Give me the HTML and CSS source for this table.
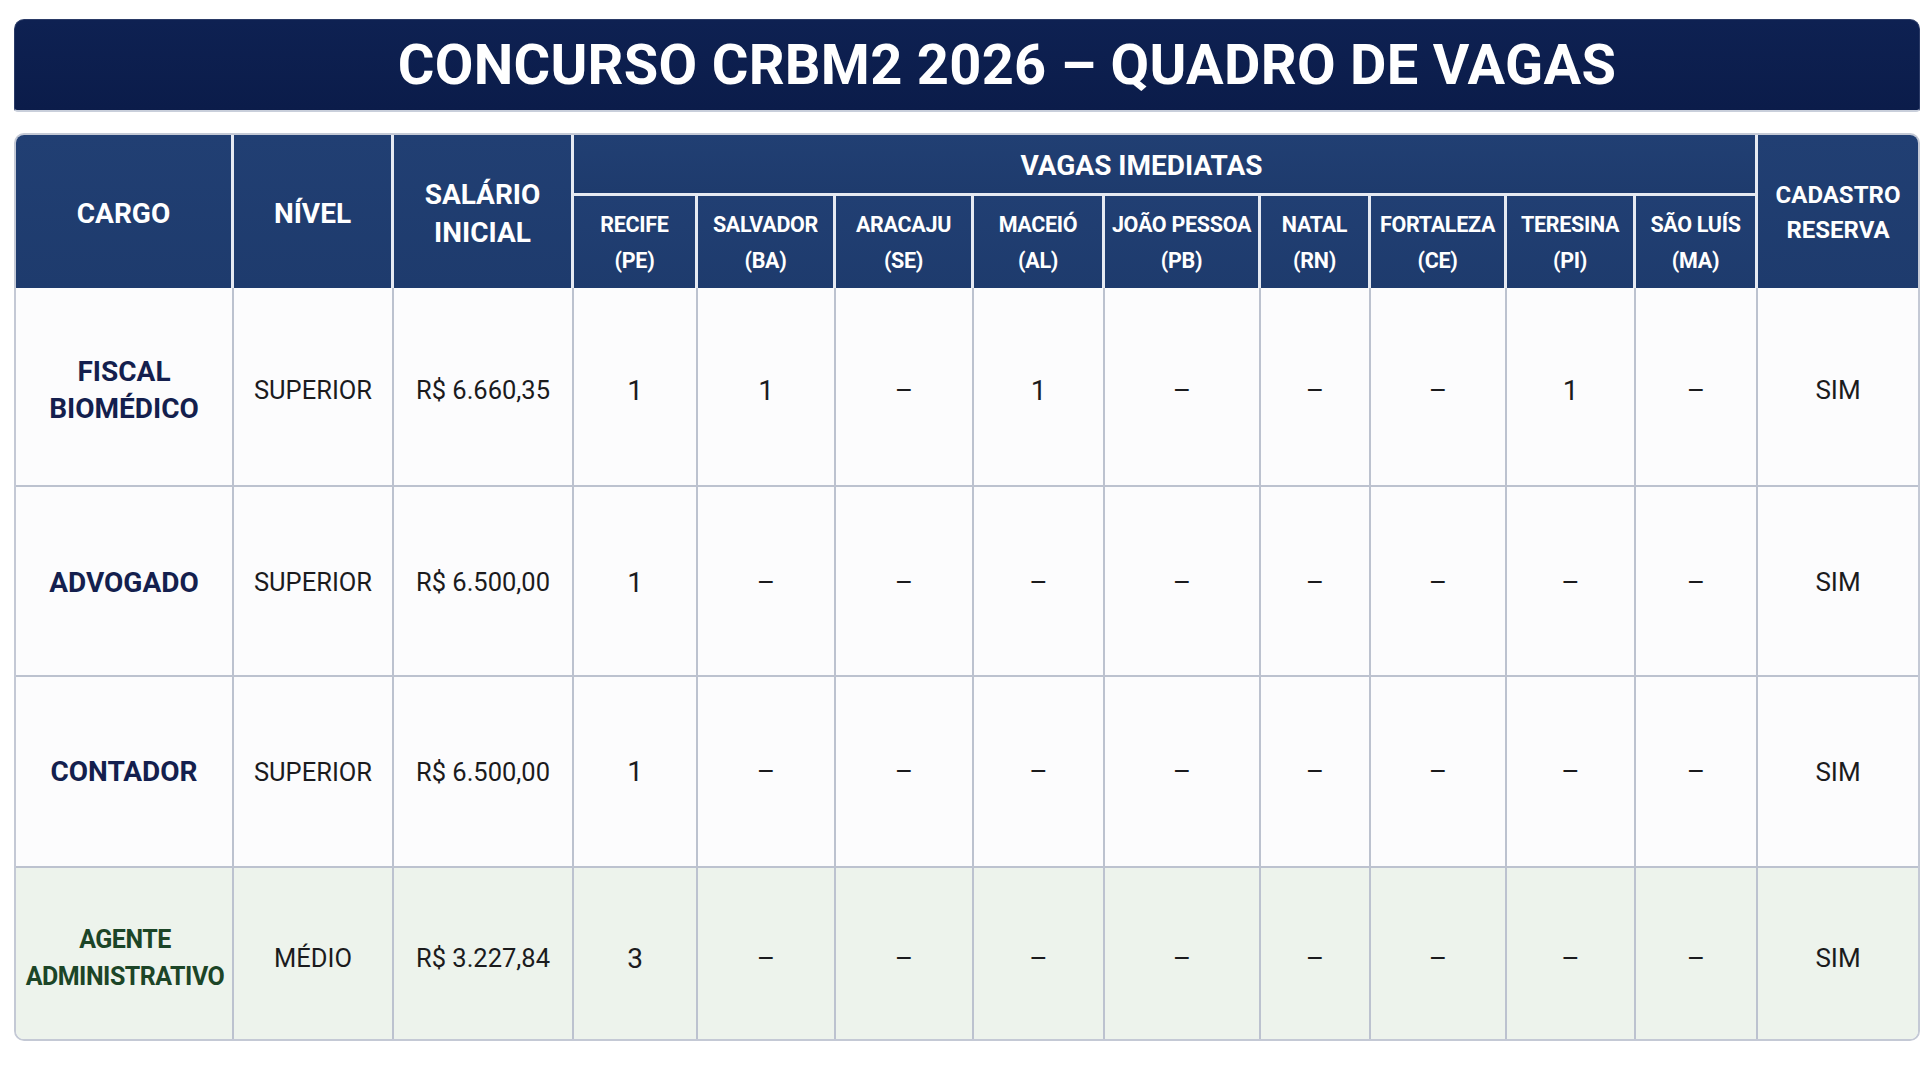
FILE: index.html
```html
<!DOCTYPE html>
<html lang="pt-BR">
<head>
<meta charset="utf-8">
<title>Concurso CRBM2 2026 – Quadro de Vagas</title>
<link rel="stylesheet" href="styles.css">
</head>
<body>
<div class="page">
  <header class="title-bar">
    <h1 class="title">CONCURSO CRBM2 2026 – QUADRO DE VAGAS</h1>
  </header>

  <div class="table-wrap">
    <div class="grid">
      <div class="hcell h-cargo">CARGO</div>
      <div class="hcell h-nivel">NÍVEL</div>
      <div class="hcell h-salario">SALÁRIO<br>INICIAL</div>
      <div class="hcell h-group"><span class="group-label">VAGAS IMEDIATAS</span></div>
      <div class="hcell h-cadastro last-col">CADASTRO<br>RESERVA</div>

      <div class="hcell sub">RECIFE<br>(PE)</div>
      <div class="hcell sub">SALVADOR<br>(BA)</div>
      <div class="hcell sub">ARACAJU<br>(SE)</div>
      <div class="hcell sub">MACEIÓ<br>(AL)</div>
      <div class="hcell sub">JOÃO PESSOA<br>(PB)</div>
      <div class="hcell sub">NATAL<br>(RN)</div>
      <div class="hcell sub">FORTALEZA<br>(CE)</div>
      <div class="hcell sub">TERESINA<br>(PI)</div>
      <div class="hcell sub">SÃO LUÍS<br>(MA)</div>

      <!-- Row 1 -->
      <div class="cell r1 cargo">FISCAL<br>BIOMÉDICO</div>
      <div class="cell r1 txt">SUPERIOR</div>
      <div class="cell r1 txt">R$ 6.660,35</div>
      <div class="cell r1 num">1</div>
      <div class="cell r1 num">1</div>
      <div class="cell r1 num">–</div>
      <div class="cell r1 num">1</div>
      <div class="cell r1 num">–</div>
      <div class="cell r1 num">–</div>
      <div class="cell r1 num">–</div>
      <div class="cell r1 num">1</div>
      <div class="cell r1 num">–</div>
      <div class="cell r1 sim last-col">SIM</div>

      <!-- Row 2 -->
      <div class="cell r2 cargo">ADVOGADO</div>
      <div class="cell r2 txt">SUPERIOR</div>
      <div class="cell r2 txt">R$ 6.500,00</div>
      <div class="cell r2 num">1</div>
      <div class="cell r2 num">–</div>
      <div class="cell r2 num">–</div>
      <div class="cell r2 num">–</div>
      <div class="cell r2 num">–</div>
      <div class="cell r2 num">–</div>
      <div class="cell r2 num">–</div>
      <div class="cell r2 num">–</div>
      <div class="cell r2 num">–</div>
      <div class="cell r2 sim last-col">SIM</div>

      <!-- Row 3 -->
      <div class="cell cargo">CONTADOR</div>
      <div class="cell txt">SUPERIOR</div>
      <div class="cell txt">R$ 6.500,00</div>
      <div class="cell num">1</div>
      <div class="cell num">–</div>
      <div class="cell num">–</div>
      <div class="cell num">–</div>
      <div class="cell num">–</div>
      <div class="cell num">–</div>
      <div class="cell num">–</div>
      <div class="cell num">–</div>
      <div class="cell num">–</div>
      <div class="cell sim last-col">SIM</div>

      <!-- Row 4 -->
      <div class="cell r4 cargo agent green last-row">AGENTE<br>ADMINISTRATIVO</div>
      <div class="cell r4 txt green last-row">MÉDIO</div>
      <div class="cell r4 txt green last-row">R$ 3.227,84</div>
      <div class="cell r4 num green last-row">3</div>
      <div class="cell r4 num green last-row">–</div>
      <div class="cell r4 num green last-row">–</div>
      <div class="cell r4 num green last-row">–</div>
      <div class="cell r4 num green last-row">–</div>
      <div class="cell r4 num green last-row">–</div>
      <div class="cell r4 num green last-row">–</div>
      <div class="cell r4 num green last-row">–</div>
      <div class="cell r4 num green last-row">–</div>
      <div class="cell r4 sim green last-row last-col">SIM</div>
    </div>
  </div>
</div>
</body>
</html>
```

FILE: styles.css
```css
* { box-sizing: border-box; }

html, body {
  margin: 0;
  padding: 0;
  background: #ffffff;
  overflow: hidden;
}

body {
  font-family: Roboto, "Liberation Sans", Arial, sans-serif;
  color: #1b1b1d;
}

.page {
  width: 1920px;
  height: 1080px;
  padding: 19px 0 0 14px;
}

.title-bar {
  width: 1906px;
  height: 93px;
  background: linear-gradient(180deg, #0e2152 0%, #0b1c4a 100%);
  border: 1px solid #2a3a66;
  border-bottom: 2px solid #c9cfdb;
  border-radius: 10px 10px 4px 4px;
  display: flex;
  align-items: center;
  justify-content: center;
  padding-left: 80px;
}

.title {
  margin: 0;
  font-size: 56px;
  font-weight: 700;
  letter-spacing: 0.3px;
  color: #ffffff;
  line-height: 1;
}

.table-wrap {
  margin-top: 21px;
  width: 1906px;
  border: 2px solid #c4c9d5;
  border-radius: 10px;
  overflow: hidden;
  background: #fcfcfd;
}

.grid {
  display: grid;
  grid-template-columns: 218px 160px 180px 124px 138px 138px 131px 156px 110px 136px 129px 122px 160px;
  grid-template-rows: 61px 92px 199px 190px 191px 171px;
}

.hcell {
  background: linear-gradient(180deg, #213f73 0%, #1e3b6d 100%);
  color: #ffffff;
  font-weight: 700;
  display: flex;
  align-items: center;
  justify-content: center;
  text-align: center;
  border-right: 3px solid #e6eaf2;
}

.h-cargo, .h-nivel, .h-salario {
  grid-row: 1 / 3;
  font-size: 28px;
  line-height: 38px;
  padding-top: 4px;
}

.h-cargo { grid-column: 1; }
.h-nivel { grid-column: 2; }
.h-salario { grid-column: 3; }

.h-group {
  grid-row: 1;
  grid-column: 4 / 13;
  font-size: 28px;
  border-bottom: 3px solid #e6eaf2;
  padding-right: 46px;
  padding-top: 2px;
}

.h-cadastro {
  grid-row: 1 / 3;
  grid-column: 13;
  font-size: 24px;
  line-height: 35px;
  padding-top: 2px;
}

.sub {
  font-size: 21.5px;
  line-height: 36px;
  letter-spacing: -0.3px;
  padding-top: 2px;
}

.last-col { border-right: none; }

.cell {
  display: flex;
  align-items: center;
  justify-content: center;
  text-align: center;
  border-right: 2px solid #bcc2cf;
  border-bottom: 2px solid #bcc2cf;
  background: #fcfcfd;
}

.cell.r1 { padding-top: 7px; }
.cell.r2 { padding-top: 2px; }
.cell.r4 { padding-top: 9px; }

.cell.last-col { border-right: none; }
.cell.last-row { border-bottom: none; }

.cargo {
  font-size: 28px;
  line-height: 37px;
  font-weight: 700;
  color: #141f4e;
}

.cargo.agent {
  color: #1c4527;
  font-size: 25px;
  letter-spacing: -0.5px;
  line-height: 37px;
  padding-left: 2px;
}

.txt {
  font-size: 25.5px;
  color: #1b1b1d;
}

.num {
  font-size: 28px;
  color: #1b1b1d;
}

.sim {
  font-size: 26px;
  color: #1b1b1d;
}

.cell.green {
  background: #edf3ec;
}
```
